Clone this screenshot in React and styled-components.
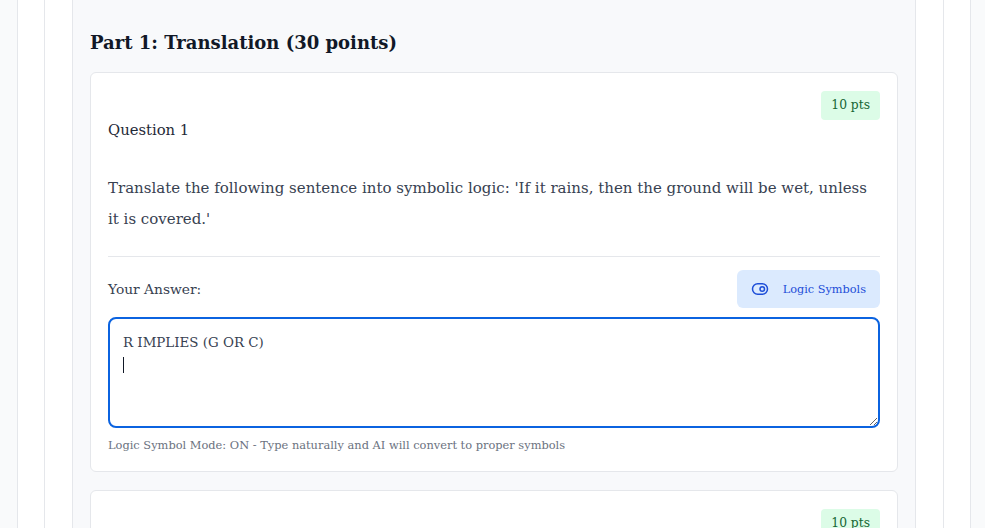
import React from 'react';
import styled, { createGlobalStyle } from 'styled-components';
import { ToggleRight } from 'lucide-react';

const GlobalStyle = createGlobalStyle`
  html, body {
    margin: 0;
    padding: 0;
    background: #f9fafb;
    overflow: hidden;
  }
  body {
    font-family: "DejaVu Serif", Georgia, serif;
    color: #1f2937;
  }
`;

const Shell = styled.div`
  width: 900px;
  min-height: 528px;
  margin-left: 17px;
  padding: 0 26px;
  background: #ffffff;
  border-left: 1px solid #e5e7eb;
  border-right: 1px solid #e5e7eb;
`;

const Inner = styled.div`
  min-height: 528px;
  padding: 0 27px;
  background: #ffffff;
  border-left: 1px solid #e5e7eb;
  border-right: 1px solid #e5e7eb;
`;

const Section = styled.section`
  min-height: 528px;
  padding: 29px 17px 0;
  background: #f8f9fb;
  border-left: 1px solid #e5e7eb;
  border-right: 1px solid #e5e7eb;
`;

const PartTitle = styled.h2`
  margin: 0 0 15px;
  font-size: 18px;
  line-height: 28px;
  font-weight: 700;
  color: #111827;
`;

const Card = styled.div`
  background: #ffffff;
  border: 1px solid #e5e7eb;
  border-radius: 6px;
  padding: 18px 17px 17px;
  margin-bottom: 18px;
`;

const PointsRow = styled.div`
  display: flex;
  justify-content: flex-end;
`;

const Badge = styled.span`
  display: inline-block;
  padding: 4px 10px;
  font-size: 12.3px;
  line-height: 21px;
  color: #166534;
  background: #dcfce7;
  border-radius: 4px;
`;

const QuestionTitle = styled.h3`
  margin: 0;
  font-size: 14.8px;
  line-height: 20px;
  font-weight: 400;
  color: #1f2937;
`;

const Prompt = styled.p`
  margin: 33px 0 0;
  padding-bottom: 21px;
  font-size: 15px;
  line-height: 31px;
  color: #374151;
  border-bottom: 1px solid #e5e7eb;
`;

const AnswerBar = styled.div`
  display: flex;
  align-items: center;
  justify-content: space-between;
  margin-top: 13px;
`;

const AnswerLabel = styled.label`
  font-size: 13.8px;
  color: #374151;
`;

const SymbolButton = styled.button`
  display: flex;
  align-items: center;
  gap: 14px;
  height: 38px;
  padding: 0 14px;
  border: none;
  border-radius: 6px;
  background: #dbeafe;
  color: #1d4ed8;
  font-family: inherit;
  font-size: 11.3px;
  cursor: pointer;
`;

const FieldWrap = styled.div`
  position: relative;
  margin-top: 9px;
`;

const AnswerInput = styled.textarea`
  display: block;
  box-sizing: border-box;
  width: 100%;
  height: 111px;
  padding: 12px 13px;
  border: 2px solid #0b63e0;
  border-radius: 8px;
  outline: none;
  resize: vertical;
  font-family: inherit;
  font-size: 13.4px;
  line-height: 24px;
  color: #374151;
  background: #ffffff;
`;

const Caret = styled.span`
  position: absolute;
  left: 15px;
  top: 40px;
  width: 1px;
  height: 16px;
  background: #111827;
`;

const Hint = styled.p`
  margin: 8px 0 0;
  font-size: 11.4px;
  line-height: 18px;
  color: #6b7280;
`;

export default function App() {
  return (
    <>
      <GlobalStyle />
      <Shell>
        <Inner>
          <Section>
            <PartTitle>Part 1: Translation (30 points)</PartTitle>
            <Card>
              <PointsRow>
                <Badge>10 pts</Badge>
              </PointsRow>
              <QuestionTitle>Question 1</QuestionTitle>
              <Prompt>
                Translate the following sentence into symbolic logic: 'If it rains, then the ground will be wet, unless it is covered.'
              </Prompt>
              <AnswerBar>
                <AnswerLabel>Your Answer:</AnswerLabel>
                <SymbolButton type="button">
                  <ToggleRight size={18} strokeWidth={2} />
                  Logic Symbols
                </SymbolButton>
              </AnswerBar>
              <FieldWrap>
                <AnswerInput defaultValue={'R IMPLIES (G OR C)\n'} spellCheck={false} />
                <Caret />
              </FieldWrap>
              <Hint>Logic Symbol Mode: ON - Type naturally and AI will convert to proper symbols</Hint>
            </Card>
            <Card>
              <PointsRow>
                <Badge>10 pts</Badge>
              </PointsRow>
              <QuestionTitle>Question 2</QuestionTitle>
            </Card>
          </Section>
        </Inner>
      </Shell>
    </>
  );
}
